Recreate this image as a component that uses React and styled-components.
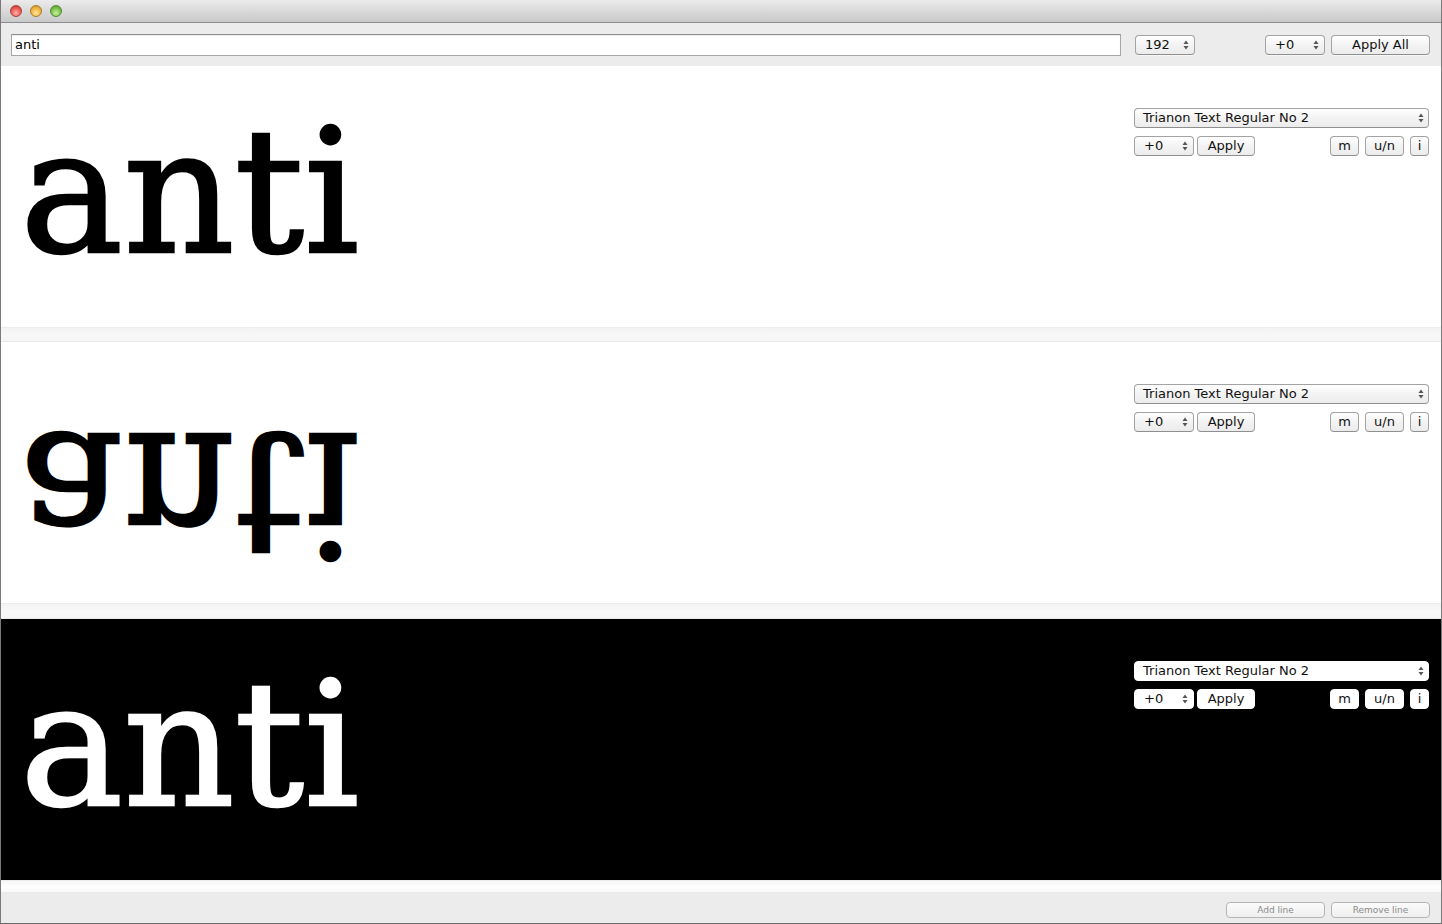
import React from 'react'
import styled, { createGlobalStyle, css } from 'styled-components'

const GlobalStyle = createGlobalStyle`
  html, body {
    margin: 0;
    padding: 0;
    background: #ececec;
    overflow: hidden;
  }
  body {
    font-family: "DejaVu Sans", "Liberation Sans", sans-serif;
  }
`

const Window = styled.div`
  width: 1442px;
  height: 924px;
  box-sizing: border-box;
  border-left: 1px solid #7a7a7a;
  border-right: 1px solid #7a7a7a;
  border-bottom: 1px solid #6a6a6a;
  display: flex;
  flex-direction: column;
  background: #ececec;
  overflow: hidden;
`

const TitleBar = styled.div`
  height: 22px;
  flex: none;
  background: linear-gradient(#ebebeb, #d6d6d6 60%, #c9c9c9);
  border-bottom: 1px solid #8c8c8c;
  display: flex;
  align-items: center;
  gap: 8px;
  padding-left: 9px;
`

const Light = styled.span`
  width: 12px;
  height: 12px;
  border-radius: 50%;
  box-sizing: border-box;
  border: 1px solid ${p => p.$edge};
  background: radial-gradient(circle at 50% 70%, ${p => p.$hi} 0%, ${p => p.$color} 55%, ${p => p.$dark} 100%);
`

const Toolbar = styled.div`
  height: 43px;
  flex: none;
  display: flex;
  align-items: center;
  padding: 0 11px 0 10px;
  background: #ececec;
`

const TextField = styled.div`
  flex: 1;
  height: 22px;
  box-sizing: border-box;
  border: 1px solid #a6a6a6;
  border-top-color: #8e8e8e;
  box-shadow: inset 0 1px 1px rgba(0,0,0,0.08);
  background: #fff;
  font-size: 13px;
  line-height: 20px;
  padding-left: 3px;
  color: #000;
  margin-right: 14px;
`

const control = css`
  box-sizing: border-box;
  height: 20px;
  border-radius: 4px;
  font-size: 13px;
  line-height: 18px;
  color: #111;
  ${p => p.$dark
    ? css`
      background: #fff;
      border: 1px solid #fff;
    `
    : css`
      background: linear-gradient(#ffffff, #f3f3f3 50%, #ececec);
      border: 1px solid #a3a3a3;
      border-bottom-color: #8f8f8f;
      box-shadow: 0 1px 0 rgba(255,255,255,0.6);
    `}
`

const StepperBox = styled.div`
  ${control}
  width: ${p => p.$w || 60}px;
  display: flex;
  align-items: center;
  justify-content: space-between;
  padding: 0 5px 0 9px;
  flex: none;
`

const Button = styled.div`
  ${control}
  width: ${p => p.$w}px;
  text-align: center;
  flex: none;
`

const Spacer = styled.div`
  flex: ${p => (p.$w ? 'none' : 1)};
  width: ${p => p.$w || 0}px;
`

const Arrows = () => (
  <svg width="6" height="10" viewBox="0 0 6 10">
    <path d="M3 0.5 L5.5 4 H0.5 Z" fill="#555" />
    <path d="M3 9.5 L5.5 6 H0.5 Z" fill="#555" />
  </svg>
)

const Stepper = ({ value, w, dark }) => (
  <StepperBox $w={w} $dark={dark}>
    <span>{value}</span>
    <Arrows />
  </StepperBox>
)

const Popup = styled.div`
  ${control}
  display: flex;
  align-items: center;
  justify-content: space-between;
  padding: 0 4px 0 8px;
`

const Panel = styled.div`
  height: 261px;
  flex: none;
  display: flex;
  justify-content: space-between;
  background: ${p => (p.$dark ? '#000' : '#fff')};
  color: ${p => (p.$dark ? '#fff' : '#000')};
  overflow: hidden;
`

const Sample = styled.div`
  font-family: "DejaVu Serif", "Liberation Serif", serif;
  font-size: 173px;
  line-height: 200px;
  height: 200px;
  margin: 26px 0 0 19px;
  white-space: nowrap;
  -webkit-text-stroke: 2.5px currentColor;
  ${p => p.$flip && css`
    transform: scaleY(-1);
    transform-origin: 50% 113px;
  `}
`

const Controls = styled.div`
  width: 295px;
  margin: 42px 12px 0 0;
  display: flex;
  flex-direction: column;
  gap: 8px;
`

const Row = styled.div`
  display: flex;
  align-items: center;
  gap: 3px;
`

const Tools = styled.div`
  display: flex;
  gap: 6px;
  margin-left: auto;
`

const Separator = styled.div`
  height: ${p => p.$h || 15}px;
  flex: none;
  box-sizing: border-box;
  border-top: 1px solid #ececec;
  border-bottom: 1px solid #e9e9e9;
  background: ${p => (p.$light
    ? 'linear-gradient(#f6f6f6, #fdfdfd 50%, #fafafa)'
    : 'linear-gradient(#f3f3f3, #f8f8f8 50%, #f6f6f6)')};
`

const BottomBar = styled.div`
  flex: 1;
  display: flex;
  justify-content: flex-end;
  align-items: flex-start;
  gap: 6px;
  padding: 9px 11px 0 0;
  background: #ececec;
`

const SmallButton = styled.div`
  width: 99px;
  height: 16px;
  box-sizing: border-box;
  border: 1px solid #b4b4b4;
  border-radius: 4px;
  background: linear-gradient(#fbfbfb, #efefef);
  font-size: 9px;
  line-height: 14px;
  text-align: center;
  color: #8a8a8a;
`

const LinePanel = ({ dark, flip }) => (
  <Panel $dark={dark}>
    <Sample $flip={flip}>anti</Sample>
    <Controls>
      <Popup $dark={dark}>
        <span>Trianon Text Regular No 2</span>
        <Arrows />
      </Popup>
      <Row>
        <Stepper value="+0" w={60} dark={dark} />
        <Button $w={58} $dark={dark}>Apply</Button>
        <Tools>
          <Button $w={29} $dark={dark}>m</Button>
          <Button $w={39} $dark={dark}>u/n</Button>
          <Button $w={19} $dark={dark}>i</Button>
        </Tools>
      </Row>
    </Controls>
  </Panel>
)

export default function App() {
  return (
    <>
      <GlobalStyle />
      <Window>
        <TitleBar>
          <Light $color="#ec5a52" $hi="#ffb0a8" $dark="#b8322b" $edge="#a9403a" />
          <Light $color="#f0b640" $hi="#ffe3a0" $dark="#c18a1c" $edge="#a97d2a" />
          <Light $color="#7cc24a" $hi="#c8f0a0" $dark="#4c9626" $edge="#4f8a36" />
        </TitleBar>
        <Toolbar>
          <TextField>anti</TextField>
          <Stepper value="192" w={60} />
          <Spacer $w={70} />
          <Stepper value="+0" w={60} />
          <Spacer $w={6} />
          <Button $w={99}>Apply All</Button>
        </Toolbar>
        <LinePanel />
        <Separator />
        <LinePanel flip />
        <Separator $h={16} />
        <LinePanel dark />
        <Separator $h={13} $light />
        <BottomBar>
          <SmallButton>Add line</SmallButton>
          <SmallButton>Remove line</SmallButton>
        </BottomBar>
      </Window>
    </>
  )
}
